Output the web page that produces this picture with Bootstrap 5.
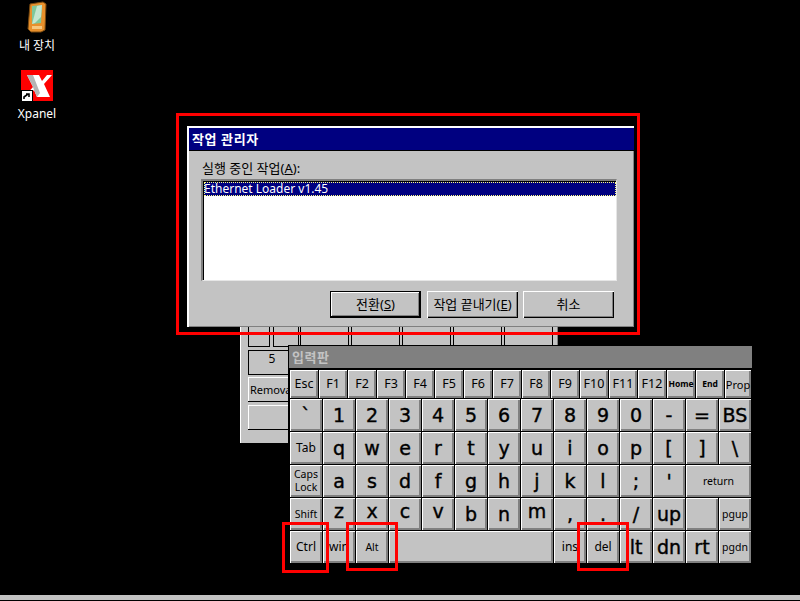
<!DOCTYPE html>
<html lang="ko">
<head>
  <meta charset="UTF-8" />
  <title>작업 관리자</title>
  <link href="https://cdn.jsdelivr.net/npm/bootstrap@5.3.3/dist/css/bootstrap.min.css" rel="stylesheet">
  <style>
    html, body { margin: 0; background: #000; overflow: hidden; }
    body { font-family: "Noto Sans", "Noto Sans CJK KR", sans-serif; color: #000; }

    .desk { width: 800px; height: 601px; background: #000; position: relative; overflow: hidden; }
    .taskline { position: absolute; left: 0; right: 0; top: 595px; height: 5px; background: #c3c3c3; }

    /* desktop icons */
    .deskicon { position: absolute; width: 72px; color: #fff; font-size: 12px; line-height: 14px; text-align: center; }
    .deskicon svg { display: block; margin: 0 auto; }
    .ic-device { left: 1px; top: 1px; }
    .ic-device svg { margin-bottom: 6px; }
    .ic-xpanel { left: 1px; top: 70px; }
    .ic-xpanel svg { margin-bottom: 5px; }

    /* window behind the keyboard */
    .backwin { position: absolute; left: 240px; top: 322px; width: 318px; height: 121px; background: #c3c3c3;
      border-left: 1px solid #fff; box-shadow: inset -1px 0 0 #808080; padding: 0 0 0 7px; overflow: hidden; }
    .cellrow { display: flex; height: 25px; margin-bottom: 3px; font-size: 12px; }
    .cellbox { border: 1px solid #000; border-top: 0; height: 25px; flex: none; text-align: center; line-height: 22px; font-size: 12px; }
    .cw1 { width: 22px; margin-right: 3px; }
    .cw2 { width: 26px; }
    .cw3 { width: 49px; margin-right: 2px; margin-left: 1px; }
    .cw4 { width: 49px; margin-right: 2px; }
    .fullcell { border-top: 1px solid #000; width: 120px; line-height: 16px; padding-right: 72px; margin-bottom: 2px; }
    .backbtn { width: 120px; height: 25px; margin-bottom: 3px; background: #c3c3c3; text-align: left; font-size: 11px;
      line-height: 25px; padding-left: 2px; box-shadow: inset 1px 1px 0 #fff; border-bottom: 1px solid #000; white-space: nowrap; }
    .backbtn span { display: inline-block; width: 38px; overflow: hidden; vertical-align: top; }

    /* task manager dialog */
    .taskdlg { position: absolute; left: 187px; top: 126px; width: 447px; height: 201px; background: #c3c3c3;
      border-top: 2px solid #fff; border-left: 2px solid #fff; box-shadow: inset -1px -1px 0 #808080; }
    .taskdlg-title { height: 23px; background: #000080; color: #fff; font-weight: 700; font-size: 13px; line-height: 22px;
      padding-left: 3px; border-bottom: 1px solid #000; letter-spacing: .6px; }
    .taskdlg-label { font-size: 13px; line-height: 14px; margin: 10px 0 4px 13px; }
    .tasklist { margin-left: 12px; width: 416px; height: 102px; background: #fff;
      border-top: 2px solid #808080; border-left: 2px solid #808080; border-right: 1px solid #e6e6e6; border-bottom: 1px solid #e6e6e6;
      box-shadow: inset 1px 1px 0 #000; padding: 1px 0 0 1px; border-radius: 0; }
    .tasklist .list-group-item { background: #000080; color: #fff; border: 1px dotted #ffff80; border-radius: 0;
      font-size: 12px; line-height: 12px; height: 14px; padding: 0; text-indent: -1px; }
    .dlgrow { margin-left: 141px; margin-top: 10px; }
    .dlgbtn { width: 91px; height: 27px; background: #c3c3c3; font-size: 13px; line-height: 25px; padding: 0; border: 0; border-radius: 0; color: #000;
      box-shadow: inset 1px 1px 0 #fff, inset -1px -1px 0 #000, inset -2px -2px 0 #808080; white-space: nowrap; }
    .dlgbtn.isdefault { box-shadow: inset 0 0 0 1px #000, inset -2px -2px 0 #000, inset 2px 2px 0 #fff, inset -3px -3px 0 #808080; }
    .dlgbtn + .dlgbtn { margin-left: 6px; }
    .dlgbtn + .dlgbtn + .dlgbtn { margin-left: 5px; }

    /* on screen keyboard */
    .inputpad { position: absolute; left: 288px; top: 345px; width: 464px; height: 219px; background: #000;
      border-top: 1px solid #000; padding: 0 1px 0 2px; }
    .inputpad-title { height: 22px; background: #808080; color: #c3c3c3; font-size: 13px; font-weight: 700; line-height: 22px;
      padding-left: 3px; margin: 0 -1px 2px -1px; letter-spacing: .5px; }
    .keyrow-f { display: grid; grid-template-columns: repeat(15, 28px) 26px; column-gap: 1px; margin-bottom: 1px; }
    .keyrows { display: grid; grid-template-columns: repeat(14, 32px); gap: 1px; grid-auto-rows: 32px; }
    .vkey { display: flex; align-items: center; justify-content: center; overflow: hidden; padding: 0; border: 0; border-radius: 0; background: #c3c3c3;
      color: #000; font-family: "DejaVu Sans", sans-serif; font-size: 19px; line-height: 1; white-space: nowrap; -webkit-text-stroke: .4px #000;
      box-shadow: inset 1px 1px 0 #fff, inset -2px -2px 0 #808080; }
    .keyrow-f .vkey { height: 28px; font-family: "Noto Sans", sans-serif; font-size: 12.5px; -webkit-text-stroke: 0; }
    .keyrow-f .vkey.tiny { font-size: 8.5px; font-weight: 700; }
    .keyrow-f .vkey.prop-key { font-size: 11px; }
    .keyrows .vkey.small-key { font-family: "Noto Sans", sans-serif; font-size: 12px; -webkit-text-stroke: 0; }
    .keyrows .vkey.narrow-key { font-size: 10.5px; }
    .keyrows .vkey.two-line { font-family: "Noto Sans", sans-serif; font-size: 10.5px; line-height: 13px; white-space: normal; text-align: center; -webkit-text-stroke: 0; }
    .keyrows .vkey.lift { padding-bottom: 5px; }
    .span2 { grid-column: span 2; }
    .span5 { grid-column: span 5; }

    /* red highlight boxes */
    .redbox { position: absolute; border: 3px solid #f00; }
    .rb-dlg { left: 176px; top: 113px; width: 464px; height: 222px; }
    .rb-ctrl { left: 282px; top: 522px; width: 47px; height: 51px; }
    .rb-alt { left: 346px; top: 522px; width: 52px; height: 49px; }
    .rb-del { left: 577px; top: 522px; width: 52px; height: 49px; }
  </style>
</head>
<body>
  <div class="desk">
    <!-- desktop icons -->
    <div class="deskicon ic-device">
      <svg width="32" height="32" viewBox="0 0 32 32">
        <polygon points="9,3 22,1 25,3 24,29 20,31 10,31 7,28" fill="#e8902c" stroke="#7a4a10" stroke-width="1"/>
        <polygon points="11,5 21,4 20,22 11,23" fill="#7fc79a"/>
        <polygon points="16,5 21,4 20,16 14,22 11,23" fill="#c4e6cf"/>
        <rect x="11" y="25" width="10" height="3" fill="#f6c77e"/>
      </svg>
      내 장치
    </div>
    <div class="deskicon ic-xpanel">
      <svg width="33" height="32" viewBox="0 0 33 32">
        <rect x="0" y="0" width="32" height="31" fill="#f00"/>
        <polygon points="6,5 18,5 21,11 26,5 31,5 23,14 29,27 16,27 13,20 7,27 3,27 12,17" fill="#fff"/>
        <polygon points="6,5 12,5 19,23 16,27 13,20 12,17" fill="#b5b5b5"/>
        <rect x="0.5" y="20.5" width="11" height="11" fill="#fff" stroke="#000" stroke-width="1"/>
        <path d="M3 29 L3 27 L7 24 M5 24 L8 24 L8 27" fill="none" stroke="#000" stroke-width="1.6"/>
      </svg>
      Xpanel
    </div>

    <!-- window behind -->
    <div class="backwin">
      <div class="cellrow">
        <div class="cellbox cw1"></div><div class="cellbox cw2"></div><div class="cellbox cw3"></div>
        <div class="cellbox cw4"></div><div class="cellbox cw4"></div><div class="cellbox cw4"></div><div class="cellbox cw4"></div>
      </div>
      <div class="cellbox fullcell">5</div>
      <div class="backbtn"><span>Removal</span></div>
      <div class="backbtn"></div>
    </div>

    <!-- keyboard -->
    <div class="inputpad">
      <div class="inputpad-title">입력판</div>
      <div class="keyrow-f">
        <button class="btn vkey">Esc</button><button class="btn vkey">F1</button><button class="btn vkey">F2</button>
        <button class="btn vkey">F3</button><button class="btn vkey">F4</button><button class="btn vkey">F5</button>
        <button class="btn vkey">F6</button><button class="btn vkey">F7</button><button class="btn vkey">F8</button>
        <button class="btn vkey">F9</button><button class="btn vkey">F10</button><button class="btn vkey">F11</button>
        <button class="btn vkey">F12</button><button class="btn vkey tiny">Home</button><button class="btn vkey tiny">End</button>
        <button class="btn vkey prop-key">Prop</button>
      </div>
      <div class="keyrows">
        <button class="btn vkey">`</button><button class="btn vkey">1</button><button class="btn vkey">2</button><button class="btn vkey">3</button>
        <button class="btn vkey">4</button><button class="btn vkey">5</button><button class="btn vkey">6</button><button class="btn vkey">7</button>
        <button class="btn vkey">8</button><button class="btn vkey">9</button><button class="btn vkey">0</button><button class="btn vkey">-</button>
        <button class="btn vkey">=</button><button class="btn vkey">BS</button>

        <button class="btn vkey small-key">Tab</button><button class="btn vkey">q</button><button class="btn vkey">w</button><button class="btn vkey">e</button>
        <button class="btn vkey">r</button><button class="btn vkey">t</button><button class="btn vkey">y</button><button class="btn vkey">u</button>
        <button class="btn vkey">i</button><button class="btn vkey">o</button><button class="btn vkey">p</button><button class="btn vkey">[</button>
        <button class="btn vkey">]</button><button class="btn vkey">\</button>

        <button class="btn vkey two-line">Caps<br>Lock</button><button class="btn vkey">a</button><button class="btn vkey">s</button><button class="btn vkey">d</button>
        <button class="btn vkey">f</button><button class="btn vkey">g</button><button class="btn vkey">h</button><button class="btn vkey">j</button>
        <button class="btn vkey">k</button><button class="btn vkey">l</button><button class="btn vkey">;</button><button class="btn vkey">'</button>
        <button class="btn vkey small-key narrow-key span2">return</button>

        <button class="btn vkey small-key narrow-key">Shift</button><button class="btn vkey lift">z</button><button class="btn vkey lift">x</button><button class="btn vkey lift">c</button>
        <button class="btn vkey lift">v</button><button class="btn vkey">b</button><button class="btn vkey">n</button><button class="btn vkey lift">m</button>
        <button class="btn vkey">,</button><button class="btn vkey">.</button><button class="btn vkey">/</button><button class="btn vkey">up</button>
        <button class="btn vkey"></button><button class="btn vkey small-key narrow-key">pgup</button>

        <button class="btn vkey small-key">Ctrl</button><button class="btn vkey small-key">win</button><button class="btn vkey small-key narrow-key">Alt</button>
        <button class="btn vkey span5"></button>
        <button class="btn vkey small-key">ins</button><button class="btn vkey small-key">del</button><button class="btn vkey">lt</button>
        <button class="btn vkey">dn</button><button class="btn vkey">rt</button><button class="btn vkey small-key narrow-key">pgdn</button>
      </div>
    </div>

    <!-- task manager -->
    <div class="taskdlg">
      <div class="taskdlg-title">작업 관리자</div>
      <div class="taskdlg-label">실행 중인 작업(<u>A</u>):</div>
      <div class="list-group tasklist">
        <div class="list-group-item active">Ethernet Loader v1.45</div>
      </div>
      <div class="d-flex dlgrow">
        <button class="btn dlgbtn isdefault">전환(<u>S</u>)</button>
        <button class="btn dlgbtn">작업 끝내기(<u>E</u>)</button>
        <button class="btn dlgbtn">취소</button>
      </div>
    </div>

    <div class="redbox rb-dlg"></div>
    <div class="redbox rb-ctrl"></div>
    <div class="redbox rb-alt"></div>
    <div class="redbox rb-del"></div>

    <div class="taskline"></div>
  </div>
  <script src="https://cdn.jsdelivr.net/npm/bootstrap@5.3.3/dist/js/bootstrap.bundle.min.js"></script>
</body>
</html>
